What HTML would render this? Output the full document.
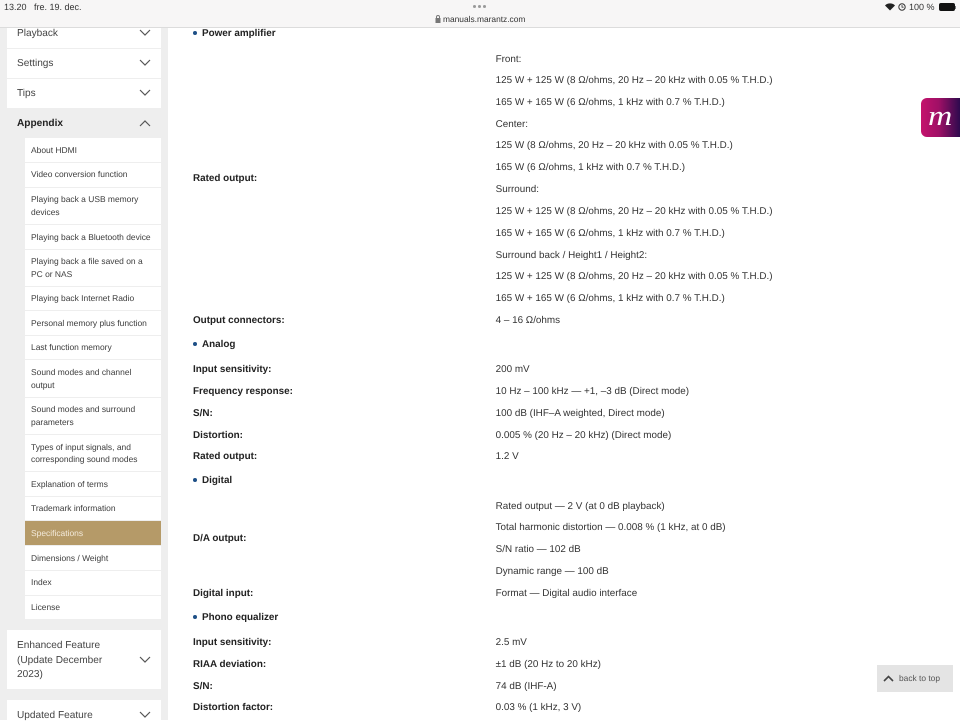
<!DOCTYPE html>
<html><head><meta charset="utf-8">
<style>
*{box-sizing:border-box}
html,body{margin:0;padding:0;width:960px;height:720px;overflow:hidden;background:#fff;font-family:"Liberation Sans",sans-serif;color:#222;text-rendering:geometricPrecision}
.a{position:absolute;white-space:nowrap;line-height:16px;height:16px}
.m{font-size:9.88px;color:#333;margin-top:.8px;margin-left:-.4px}
.b{font-size:9.9px;font-weight:bold;color:#222;margin-top:.8px}
.box{position:absolute;background:#fff}
.n{font-size:10.1px;color:#444;left:17px;margin-top:.7px}
.s{font-size:8.45px;color:#3c3c3c;left:31px;margin-top:.3px}
.dot{position:absolute;left:193px;width:4px;height:4px;border-radius:50%;background:#1d4f86}
svg.c{position:absolute;left:139px;width:12px;height:8px;fill:none;stroke:#555;stroke-width:1.2}
</style></head><body>
<div style="position:absolute;left:0;top:0;width:168px;height:720px;background:#eee"></div>

<div class="box" style="left:7px;top:28px;width:154px;height:20px"></div>
<div class="box" style="left:7px;top:49px;width:154px;height:29px"></div>
<div class="box" style="left:7px;top:79px;width:154px;height:29px"></div>
<div class="a n" style="top:25px">Playback</div>
<div class="a n" style="top:55px">Settings</div>
<div class="a n" style="top:85px">Tips</div>
<div class="a n" style="top:115px;font-weight:bold;color:#222">Appendix</div>
<svg class="c" style="top:29px"><path d="M1 1l5 5 5-5"/></svg>
<svg class="c" style="top:59px"><path d="M1 1l5 5 5-5"/></svg>
<svg class="c" style="top:89px"><path d="M1 1l5 5 5-5"/></svg>
<svg class="c" style="top:120px"><path d="M1 6l5-5 5 5"/></svg>

<div class="box" style="left:25px;top:138px;width:136px;height:24px"></div>
<div class="box" style="left:25px;top:163px;width:136px;height:24px"></div>
<div class="box" style="left:25px;top:188px;width:136px;height:36px"></div>
<div class="box" style="left:25px;top:225px;width:136px;height:24px"></div>
<div class="box" style="left:25px;top:250px;width:136px;height:36px"></div>
<div class="box" style="left:25px;top:287px;width:136px;height:23px"></div>
<div class="box" style="left:25px;top:311px;width:136px;height:24px"></div>
<div class="box" style="left:25px;top:336px;width:136px;height:23px"></div>
<div class="box" style="left:25px;top:360px;width:136px;height:37px"></div>
<div class="box" style="left:25px;top:398px;width:136px;height:36px"></div>
<div class="box" style="left:25px;top:435px;width:136px;height:36px"></div>
<div class="box" style="left:25px;top:472px;width:136px;height:24px"></div>
<div class="box" style="left:25px;top:497px;width:136px;height:23px"></div>
<div class="box" style="left:25px;top:521px;width:136px;height:24px;background:#b59a68"></div>
<div class="box" style="left:25px;top:546px;width:136px;height:24px"></div>
<div class="box" style="left:25px;top:571px;width:136px;height:24px"></div>
<div class="box" style="left:25px;top:596px;width:136px;height:23px"></div>

<div class="a s" style="top:142px">About HDMI</div>
<div class="a s" style="top:166px">Video conversion function</div>
<div class="a s" style="top:191px">Playing back a USB memory</div>
<div class="a s" style="top:204px">devices</div>
<div class="a s" style="top:229px">Playing back a Bluetooth device</div>
<div class="a s" style="top:253px">Playing back a file saved on a</div>
<div class="a s" style="top:266px">PC or NAS</div>
<div class="a s" style="top:290px">Playing back Internet Radio</div>
<div class="a s" style="top:315px">Personal memory plus function</div>
<div class="a s" style="top:339px">Last function memory</div>
<div class="a s" style="top:364px">Sound modes and channel</div>
<div class="a s" style="top:377px">output</div>
<div class="a s" style="top:401px">Sound modes and surround</div>
<div class="a s" style="top:414px">parameters</div>
<div class="a s" style="top:439px">Types of input signals, and</div>
<div class="a s" style="top:451px">corresponding sound modes</div>
<div class="a s" style="top:476px">Explanation of terms</div>
<div class="a s" style="top:500px">Trademark information</div>
<div class="a s" style="top:525px;color:#f3eadb">Specifications</div>
<div class="a s" style="top:550px">Dimensions / Weight</div>
<div class="a s" style="top:574px">Index</div>
<div class="a s" style="top:599px">License</div>

<div class="box" style="left:7px;top:630px;width:154px;height:59px"></div>
<div class="a n" style="top:637px">Enhanced Feature</div>
<div class="a n" style="top:652px">(Update December</div>
<div class="a n" style="top:666px">2023)</div>
<svg class="c" style="top:656px"><path d="M1 1l5 5 5-5"/></svg>
<div class="box" style="left:7px;top:700px;width:154px;height:20px"></div>
<div class="a n" style="top:707px">Updated Feature</div>
<svg class="c" style="top:711px"><path d="M1 1l5 5 5-5"/></svg>

<div class="dot" style="top:31px"></div><div class="a b" style="left:202px;top:25px">Power amplifier</div>
<div class="a b" style="left:193px;top:170px">Rated output:</div>
<div class="a b" style="left:193px;top:312px">Output connectors:</div>
<div class="dot" style="top:342px"></div><div class="a b" style="left:202px;top:336px">Analog</div>
<div class="a b" style="left:193px;top:361px">Input sensitivity:</div>
<div class="a b" style="left:193px;top:383px">Frequency response:</div>
<div class="a b" style="left:193px;top:405px">S/N:</div>
<div class="a b" style="left:193px;top:427px">Distortion:</div>
<div class="a b" style="left:193px;top:448px">Rated output:</div>
<div class="dot" style="top:478px"></div><div class="a b" style="left:202px;top:472px">Digital</div>
<div class="a b" style="left:193px;top:530px">D/A output:</div>
<div class="a b" style="left:193px;top:585px">Digital input:</div>
<div class="dot" style="top:615px"></div><div class="a b" style="left:202px;top:609px">Phono equalizer</div>
<div class="a b" style="left:193px;top:634px">Input sensitivity:</div>
<div class="a b" style="left:193px;top:656px">RIAA deviation:</div>
<div class="a b" style="left:193px;top:678px">S/N:</div>
<div class="a b" style="left:193px;top:699px">Distortion factor:</div>

<div class="a m" style="left:496px;top:51px">Front:</div>
<div class="a m" style="left:496px;top:72px">125 W + 125 W (8 Ω/ohms, 20 Hz – 20 kHz with 0.05 % T.H.D.)</div>
<div class="a m" style="left:496px;top:94px">165 W + 165 W (6 Ω/ohms, 1 kHz with 0.7 % T.H.D.)</div>
<div class="a m" style="left:496px;top:116px">Center:</div>
<div class="a m" style="left:496px;top:137px">125 W (8 Ω/ohms, 20 Hz – 20 kHz with 0.05 % T.H.D.)</div>
<div class="a m" style="left:496px;top:159px">165 W (6 Ω/ohms, 1 kHz with 0.7 % T.H.D.)</div>
<div class="a m" style="left:496px;top:181px">Surround:</div>
<div class="a m" style="left:496px;top:203px">125 W + 125 W (8 Ω/ohms, 20 Hz – 20 kHz with 0.05 % T.H.D.)</div>
<div class="a m" style="left:496px;top:225px">165 W + 165 W (6 Ω/ohms, 1 kHz with 0.7 % T.H.D.)</div>
<div class="a m" style="left:496px;top:247px">Surround back / Height1 / Height2:</div>
<div class="a m" style="left:496px;top:268px">125 W + 125 W (8 Ω/ohms, 20 Hz – 20 kHz with 0.05 % T.H.D.)</div>
<div class="a m" style="left:496px;top:290px">165 W + 165 W (6 Ω/ohms, 1 kHz with 0.7 % T.H.D.)</div>
<div class="a m" style="left:496px;top:312px">4 – 16 Ω/ohms</div>
<div class="a m" style="left:496px;top:361px">200 mV</div>
<div class="a m" style="left:496px;top:383px">10 Hz – 100 kHz — +1, –3 dB (Direct mode)</div>
<div class="a m" style="left:496px;top:405px">100 dB (IHF–A weighted, Direct mode)</div>
<div class="a m" style="left:496px;top:427px">0.005 % (20 Hz – 20 kHz) (Direct mode)</div>
<div class="a m" style="left:496px;top:448px">1.2 V</div>
<div class="a m" style="left:496px;top:498px">Rated output — 2 V (at 0 dB playback)</div>
<div class="a m" style="left:496px;top:519px">Total harmonic distortion — 0.008 % (1 kHz, at 0 dB)</div>
<div class="a m" style="left:496px;top:541px">S/N ratio — 102 dB</div>
<div class="a m" style="left:496px;top:563px">Dynamic range — 100 dB</div>
<div class="a m" style="left:496px;top:585px">Format — Digital audio interface</div>
<div class="a m" style="left:496px;top:634px">2.5 mV</div>
<div class="a m" style="left:496px;top:656px">±1 dB (20 Hz to 20 kHz)</div>
<div class="a m" style="left:496px;top:678px">74 dB (IHF-A)</div>
<div class="a m" style="left:496px;top:699px">0.03 % (1 kHz, 3 V)</div>

<div style="position:absolute;left:0;top:0;width:960px;height:28px;background:#f7f6f6;border-bottom:1px solid #dcdcdc"></div>
<div class="a" style="left:4px;top:-1px;font-size:9px;color:#333">13.20</div>
<div class="a" style="left:34px;top:-1px;font-size:9px;color:#333">fre. 19. dec.</div>
<div style="position:absolute;left:473px;top:5px;width:3px;height:3px;border-radius:50%;background:#999"></div>
<div style="position:absolute;left:478px;top:5px;width:3px;height:3px;border-radius:50%;background:#999"></div>
<div style="position:absolute;left:483px;top:5px;width:3px;height:3px;border-radius:50%;background:#999"></div>
<svg style="position:absolute;left:435px;top:15px" width="6" height="8"><rect x="0.5" y="3" width="5" height="5" fill="#777"/><path d="M1.5 3V2a1.5 1.5 0 0 1 3 0v1" fill="none" stroke="#777"/></svg>
<div class="a" style="left:443px;top:11px;font-size:8.4px;color:#333">manuals.marantz.com</div>

<svg style="position:absolute;left:885px;top:3px" width="10" height="8" viewBox="0 0 10 8"><path d="M5 7.5L0 2.5a7 7 0 0 1 10 0z" fill="#222"/></svg>
<svg style="position:absolute;left:898px;top:3px" width="8" height="8" viewBox="0 0 8 8"><circle cx="4" cy="4" r="3.2" fill="none" stroke="#333"/><path d="M4 2v2.2h1.6" fill="none" stroke="#333" stroke-width=".8"/></svg>
<div class="a" style="left:909px;top:-1px;font-size:9px;color:#333">100 %</div>
<div style="position:absolute;left:939px;top:3px;width:16px;height:8px;border-radius:2px;background:#111"></div>
<div style="position:absolute;left:955px;top:6px;width:1px;height:3px;background:#777"></div>

<div style="position:absolute;left:921px;top:98px;width:39px;height:39px;border-radius:6px 0 0 6px;background:linear-gradient(90deg,#c4126c,#a01066 45%,#2d0a4e);"></div>
<div class="a" style="left:928px;top:105px;height:24px;line-height:24px;font-family:'Liberation Serif',serif;font-style:italic;font-size:28px;color:#fff;transform:scaleX(1.2);transform-origin:left">m</div>

<div style="position:absolute;left:877px;top:665px;width:76px;height:27px;background:#e4e4e4"></div>
<svg style="position:absolute;left:883px;top:675px" width="11" height="7" viewBox="0 0 11 7"><path d="M1 6l4.5-4.5L10 6" fill="none" stroke="#444" stroke-width="1.6"/></svg>
<div class="a" style="left:899px;top:670px;font-size:8.4px;color:#555">back to top</div>
</body></html>
